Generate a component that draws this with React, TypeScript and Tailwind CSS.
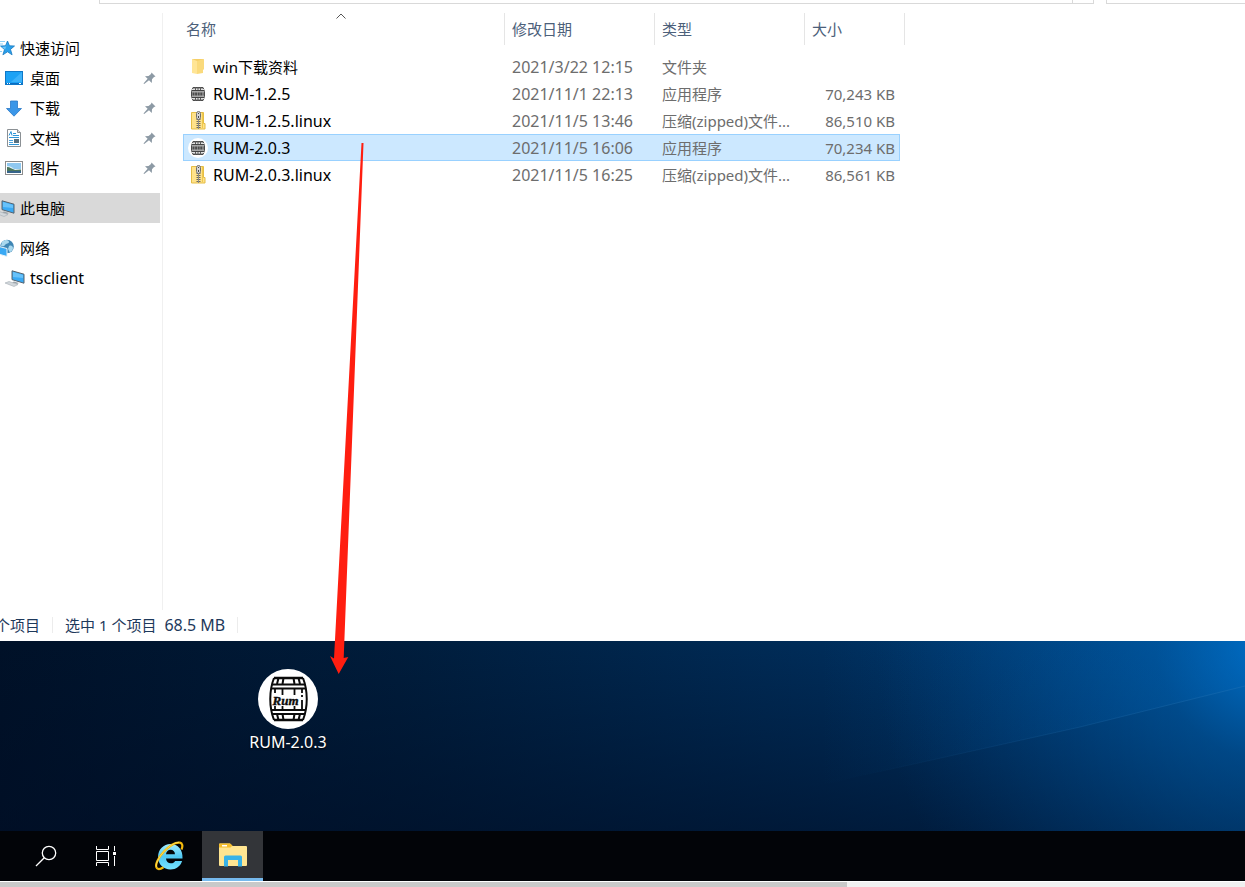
import React from "react";

function StarIcon() {
  return (
    <svg width="17" height="16" viewBox="0 0 17 16" className="shrink-0">
      <path d="M9.5 1l2 4.8 5 .2-4 3.4 1.6 5.4-4.6-3-4.6 3 1.6-5.2-4-3.6 5-.2z" fill="#2aa0ea" stroke="#1878c0" strokeWidth=".8" />
      <path d="M9.5 2.600l-1.600 4-4 .3 3.200 2.500z" fill="#6cc6f8" />
      <path d="M1 1.500h6M1 4h4M0 6.500h3M0 11.500h4" stroke="#8fd0f5" strokeWidth="1" />
    </svg>
  );
}

function DesktopIcon() {
  return (
    <svg width="18" height="14" viewBox="0 0 18 14" className="shrink-0">
      <rect x=".5" y=".5" width="17" height="13" fill="#1ca2f5" stroke="#0f78c8" />
      <path d="M17 1v10H6z" fill="#3cb2fa" />
      <path d="M1 12.5h16" stroke="#0a6cc0" />
      <path d="M2 12.5h1M4 12.5h1M14 12.5h2" stroke="#fff" />
    </svg>
  );
}

function DownloadIcon() {
  return (
    <svg width="18" height="17" viewBox="0 0 18 17" className="shrink-0">
      <path d="M5.5 1h7v7.5h4L9 16.2 1.5 8.5h4z" fill="#3a96e8" stroke="#2878c8" strokeWidth=".8" />
    </svg>
  );
}

function DocumentIcon() {
  return (
    <svg width="18" height="18" viewBox="0 0 18 18" className="shrink-0">
      <path d="M2.500.5h10l3 3v14h-13z" fill="#fff" stroke="#8b9094" />
      <path d="M12.500.5v3h3" fill="#ddd" stroke="#8b9094" />
      <path d="M4 6.500l2-4 1 4M8 4.500h3M8 6.500h6M4 8.500h10M4 15.500h10" stroke="#2f96d8" fill="none" />
      <path d="M4 11.500h4M4 13.500h4" stroke="#4aa3dc" />
      <rect x="9" y="10" width="5" height="4" fill="#59717f" />
    </svg>
  );
}

function PictureIcon() {
  return (
    <svg width="18" height="14" viewBox="0 0 18 14" className="shrink-0">
      <rect x=".5" y=".5" width="17" height="13" fill="#fff" stroke="#8c8c8c" />
      <rect x="2" y="2" width="14" height="10" fill="#8fc8f0" />
      <path d="M2 5c3 0 5 1 7 3h7v1H2z" fill="#e3f3fa" />
      <path d="M2 6c3 0 5 2 8 3l6-.5V10H2z" fill="#4b755c" />
      <path d="M2 10h14v2H2z" fill="#36648b" />
    </svg>
  );
}

function ComputerIcon() {
  return (
    <svg width="20" height="17" viewBox="0 0 20 17" className="shrink-0">
      <path d="M7 .8l12 3.4v9L7 9.600z" fill="#39a9f4" stroke="#56636d" strokeWidth="1" />
      <path d="M8 2l10 3v3L8 7z" fill="#67c2fa" />
      <path d="M9 11.500l5 1.500-2 1-5-1.500z" fill="#9aa2a8" />
      <path d="M0 13l4-1.500 9 3-4 2z" fill="#d3d8dc" stroke="#a5adb3" strokeWidth=".6" />
    </svg>
  );
}

function NetworkIcon() {
  return (
    <svg width="20" height="18" viewBox="0 0 20 18" className="shrink-0">
      <circle cx="12" cy="7.500" r="6.800" fill="#3f86b4" />
      <path d="M7 3c3-3 7-2 7 0s-3 1-4 3-3 1-4 1zM14 7c2-1 4 0 4 2s-2 4-3 4-1-2-2-3z" fill="#a9d8ee" />
      <path d="M0 6.500l12 3v8l-12-3.500z" fill="#39a9f4" stroke="#e9f2f8" strokeWidth="1" />
    </svg>
  );
}

function PinIcon() {
  return (
    <svg width="13" height="13" viewBox="0 0 13 13" className="shrink-0">
      <path d="M8.500.5l4 4-1.500.5L9 7.300 8.800 11 6 8.300 1.200 12l-.7-.5L4.600 6.800 2 4.300l3.600-.2L8 2z" fill="#8d9aa5" />
    </svg>
  );
}

function FolderIcon() {
  return (
    <svg width="14" height="17" viewBox="0 0 14 17" className="shrink-0">
      <path d="M1 1h11.500v10l-1 1H1z" fill="#f5cf68" />
      <path d="M1 1l5 2v13l-5-1z" fill="#ffe596" />
      <path d="M6 3v13l6-1V12l1-1V1z" fill="#fada7c" />
    </svg>
  );
}

function ZipIcon() {
  return (
    <svg width="15" height="19" viewBox="0 0 15 19" className="shrink-0">
      <path d="M.5 1.500h12v11h1.500v5.500H.5z" fill="#ffe28a" stroke="#e5bd45" />
      <path d="M11.500 2v15" stroke="#efc94d" />
      <path d="M7.500 8v10" stroke="#6c675a" strokeWidth="4" strokeDasharray="1 1" />
      <path d="M7.500 8v10" stroke="#8a8a8a" strokeWidth="1" />
      <rect x="5.500" y=".5" width="4" height="8" rx="2" fill="#d5d5d5" stroke="#707070" />
      <path d="M7.500 2v1M7.500 5v2" stroke="#444" />
    </svg>
  );
}

function BarrelDrawing() {
  return (
    <g fill="none" stroke="#0b0b0b">
      <path d="M16 9h29M16 51h29" strokeWidth="2.400" />
      <path d="M16 9c-5 13-5 29 0 42M45 9c5 13 5 29 0 42" strokeWidth="2" />
      <path d="M14 15.500h33M13 19.500h35M13 41h35M14 45h33" strokeWidth="2" />
      <path d="M20.500 9l-1.500 6M25.500 9l-1 6M35.500 9l1 6M40.500 9l1.500 6M19 45l1.500 6M24.500 45l1 6M36.500 45l-1 6M42 45l-1.500 6" strokeWidth="2" />
      <path d="M17 20v4M24.500 20v6M36.500 20v6M44 20v4M17 37v4M24.500 37v4M36.500 37v4M44 31v10M44 26v2" strokeWidth="1.800" />
    </g>
  );
}

function BarrelBadge() {
  return (
    <svg width="60" height="60" viewBox="0 0 60 60" className="shrink-0">
      <circle cx="30" cy="30" r="30" fill="#fff" />
      <BarrelDrawing />
      <text
        x="27.500"
        y="35.500"
        textAnchor="middle"
        fontFamily="Liberation Serif, serif"
        fontSize="13"
        fontWeight="700"
        fontStyle="italic"
        fill="#0b0b0b"
        stroke="#0b0b0b"
        strokeWidth=".4"
      >
        Rum
      </text>
    </svg>
  );
}

function SmallBarrelIcon() {
  return (
    <svg width="20" height="20" viewBox="0 0 20 20" className="shrink-0">
      <circle cx="10" cy="10" r="10" fill="#fff" />
      <path d="M5 3.500h10l1.500 4v5l-1.500 4H5l-1.500-4v-5z" fill="#a8a8a8" stroke="#4a4a4a" />
      <path d="M4 5.500h12M4 14.500h12" stroke="#e2e2e2" />
      <path d="M4 6.500h12M4 13.500h12" stroke="#444" />
      <path d="M4.500 10h11" stroke="#4c4c4c" strokeWidth="3" strokeDasharray="2 .6" />
      <path d="M7.500 3v3M10 3v3M12.500 3v3M7.500 14v3M10 14v3M12.500 14v3" stroke="#5a5a5a" />
    </svg>
  );
}

type NavItemProps = {
  icon: React.ReactNode;
  label: string;
  root?: boolean;
  pinned?: boolean;
  active?: boolean;
  latin?: boolean;
};

function NavItem({ icon, label, root, pinned, active, latin }: NavItemProps) {
  return (
    <li>
      <button
        type="button"
        className={`flex h-[30px] w-full items-center text-left ${active ? "bg-[#d9d9d9]" : "hover:bg-[#e5f3ff]"}`}
      >
        <span className={`flex shrink-0 items-center ${root ? "-ml-[5px] mr-[5px] w-5 justify-end" : "ml-[5px] mr-[5px] w-5"}`}>
          {icon}
        </span>
        <span className={`flex-1 text-black ${latin ? "text-base leading-5" : ""}`}>{label}</span>
        {pinned && (
          <span className="mr-1">
            <PinIcon />
          </span>
        )}
      </button>
    </li>
  );
}

const files = [
  { name: "win下载资料", date: "2021/3/22 12:15", type: "文件夹", size: "", kind: "folder" },
  { name: "RUM-1.2.5", date: "2021/11/1 22:13", type: "应用程序", size: "70,243 KB", kind: "app" },
  { name: "RUM-1.2.5.linux", date: "2021/11/5 13:46", type: "压缩(zipped)文件...", size: "86,510 KB", kind: "zip" },
  { name: "RUM-2.0.3", date: "2021/11/5 16:06", type: "应用程序", size: "70,234 KB", kind: "app", selected: true },
  { name: "RUM-2.0.3.linux", date: "2021/11/5 16:25", type: "压缩(zipped)文件...", size: "86,561 KB", kind: "zip" },
];

function FileTable() {
  return (
    <table className="ml-5 mt-[9px] w-[722px] table-fixed border-separate border-spacing-0 whitespace-nowrap text-[#6d6d6d]">
      <colgroup>
        <col />
        <col className="w-[150px]" />
        <col className="w-[150px]" />
        <col className="w-[95px]" />
        <col className="w-[5px]" />
      </colgroup>
      <thead>
        <tr className="h-8 text-left text-[#4c607a]">
          <th className="relative border-r border-[#e5e5e5] py-0 pl-[3px] font-normal">
            <button type="button">名称</button>
            <svg width="10" height="6" viewBox="0 0 10 6" className="absolute left-1/2 top-0 -ml-[7px]">
              <path d="M.5 5.500L5 1l4.500 4.500" fill="none" stroke="#555" />
            </svg>
          </th>
          <th className="border-r border-[#e5e5e5] py-0 pl-[7px] font-normal">
            <button type="button">修改日期</button>
          </th>
          <th className="border-r border-[#e5e5e5] py-0 pl-[7px] font-normal">
            <button type="button">类型</button>
          </th>
          <th colSpan={2} className="border-r border-[#e5e5e5] py-0 pl-[7px] font-normal">
            <button type="button">大小</button>
          </th>
        </tr>
      </thead>
      <tbody>
        <tr aria-hidden="true">
          <td colSpan={5} className="h-2 p-0" />
        </tr>
        {files.map((f) => {
          const cell = f.selected ? "border-y border-[#99d1ff] bg-[#cce8ff]" : "";
          return (
            <tr key={f.name} className="h-[27px]">
              <td className={`p-0 text-black ${cell} ${f.selected ? "border-l" : ""}`}>
                <span className={`flex items-center ${f.selected ? "pl-1" : "pl-[5px]"}`}>
                  <span className="mr-[5px] flex w-5 justify-center">
                    {f.kind === "folder" && <FolderIcon />}
                    {f.kind === "app" && <SmallBarrelIcon />}
                    {f.kind === "zip" && <ZipIcon />}
                  </span>
                  <span className={f.kind === "folder" ? "" : "text-base leading-5"}>{f.name}</span>
                </span>
              </td>
              <td className={`py-0 pl-[7px] pr-0 text-base leading-5 ${cell}`}>{f.date}</td>
              <td className={`py-0 pl-[7px] pr-0 ${cell}`}>{f.type}</td>
              <td className={`py-0 pl-0 text-right ${cell} ${f.selected ? "border-r pr-1" : "pr-[5px]"}`}>{f.size}</td>
              <td className="p-0" />
            </tr>
          );
        })}
      </tbody>
    </table>
  );
}

function Wallpaper() {
  return (
    <svg className="absolute inset-0 h-full w-full" viewBox="0 0 1245 190" preserveAspectRatio="none" aria-hidden="true">
      <defs>
        <linearGradient id="base" x1="0" x2="1" y1="0" y2="0">
          <stop offset="0" stopColor="#001128" />
          <stop offset=".32" stopColor="#001d3c" />
          <stop offset=".66" stopColor="#002d5a" />
          <stop offset=".85" stopColor="#003a70" />
          <stop offset="1" stopColor="#00427c" />
        </linearGradient>
        <linearGradient id="shade" x1="0" x2="0" y1="0" y2="1">
          <stop offset="0" stopColor="#000d24" stopOpacity="0" />
          <stop offset="1" stopColor="#000d24" stopOpacity=".6" />
        </linearGradient>
        <radialGradient id="glow" gradientUnits="userSpaceOnUse" cx="1275" cy="0" r="400">
          <stop offset="0" stopColor="#0074d0" />
          <stop offset=".3" stopColor="#0060b0" stopOpacity=".5" />
          <stop offset="1" stopColor="#004a90" stopOpacity="0" />
        </radialGradient>
        <linearGradient id="beam" gradientUnits="userSpaceOnUse" x1="820" x2="1245" y1="0" y2="0">
          <stop offset="0" stopColor="#0062b4" stopOpacity="0" />
          <stop offset="1" stopColor="#0062b4" stopOpacity=".25" />
        </linearGradient>
        <linearGradient id="edge" gradientUnits="userSpaceOnUse" x1="860" x2="1245" y1="0" y2="0">
          <stop offset="0" stopColor="#2a78b8" stopOpacity="0" />
          <stop offset="1" stopColor="#2a78b8" stopOpacity=".35" />
        </linearGradient>
      </defs>
      <rect width="1245" height="190" fill="url(#base)" />
      <rect width="1245" height="190" fill="url(#shade)" />
      <rect width="1245" height="190" fill="url(#glow)" />
      <path d="M820 0H1245V45L1080 86 860 135 820 145z" fill="url(#beam)" />
      <path d="M860 135L1080 86 1245 45" stroke="url(#edge)" fill="none" />
    </svg>
  );
}

function Taskbar() {
  return (
    <footer className="flex h-[50px] bg-[#020408] pl-4">
      <button type="button" aria-label="搜索" className="flex w-[60px] items-center justify-center">
        <svg width="22" height="22" viewBox="0 0 22 22" fill="none" stroke="#fff" strokeWidth="1.300">
          <circle cx="14" cy="8" r="6.700" />
          <path d="M9.300 12.700L1 21" />
        </svg>
      </button>
      <button type="button" aria-label="任务视图" className="flex w-[60px] items-center justify-center">
        <svg width="22" height="20" viewBox="0 0 22 20" fill="none" stroke="#fff">
          <path d="M1.500 0v3.500h12V0M1.500 20v-3.500h12V20M1.500 5.500h12v9h-12zM19.500 0v5M19.500 10v10" />
          <path d="M18 6h3v3h-3z" fill="#fff" stroke="none" />
        </svg>
      </button>
      <button type="button" aria-label="Internet Explorer" className="mr-1 flex w-[62px] items-center justify-center pl-1">
        <svg width="30" height="30" viewBox="0 0 30 30">
          <defs>
            <linearGradient id="ieBlue" x1="0" x2="0" y1="0" y2="1">
              <stop offset="0" stopColor="#a2ecff" />
              <stop offset=".5" stopColor="#4fc8f3" />
              <stop offset="1" stopColor="#79e4ff" />
            </linearGradient>
          </defs>
          <path
            fillRule="evenodd"
            d="M16.500 3C24 3 29 8.500 28.500 17.500H12c.2 3 2.200 4.800 4.800 4.800 2.200 0 3.500-.8 4.300-2.300h7C26.300 25.500 22 28.500 16.500 28.500 9.500 28.500 4 23.500 4 16S9.500 3 16.500 3zM12 13.200h9c-.2-2.700-2-4.400-4.400-4.400S12.400 10.500 12 13.200z"
            fill="url(#ieBlue)"
          />
          <path
            d="M27.500 8.500c1.500-3.500 1-6.300-1.600-6.800C22 1 15.500 4.800 10 10.500 3.500 17.300.5 24.800 3 27.300c1.300 1.300 3.800.7 6.500-1"
            fill="none"
            stroke="#f3b90c"
            strokeWidth="2.200"
          />
          <path d="M25 1.300C19.500 1.500 12 7.500 7.500 13.500 3.500 18.800 1.500 24 2.500 26" fill="none" stroke="#ffe163" strokeWidth=".9" />
        </svg>
      </button>
      <button
        type="button"
        aria-label="文件资源管理器"
        className="flex w-[61px] items-center justify-center border-b-[3px] border-[#76b9ed] bg-[#333539]"
      >
        <svg width="28" height="24" viewBox="0 0 28 24">
          <path d="M0 1.500Q0 .5 1 .5h10l2.500 2.500H27q1 0 1 1V22q0 1-1 1H1q-1 0-1-1z" fill="#ffe591" />
          <path d="M0 1.500Q0 .5 1 .5h10L13.500 2.500 11.500 4.500H0z" fill="#f4bd2d" />
          <path d="M3 2h5v1.500H3z" fill="#fff" />
          <path d="M5 23.500V14q0-1.500 1.500-1.500h15q1.500 0 1.500 1.500v9.500h-4V17H9v6.500z" fill="#38b3e8" />
        </svg>
      </button>
    </footer>
  );
}

export default function App() {
  return (
    <div className="relative flex min-h-screen flex-col overflow-hidden bg-white font-['Noto_Sans','Noto_Sans_CJK_SC',sans-serif] text-[15px] leading-5">
      <section className="flex flex-1 flex-col">
        <div className="flex h-1 gap-3 pl-[99px]">
          <div className="flex flex-1 justify-end border border-t-0 border-[#d9d9d9]">
            <span className="w-[21px] border-l border-[#d9d9d9]" />
          </div>
          <div className="w-[139px] border-b border-l border-[#d9d9d9]" />
        </div>
        <div className="flex flex-1">
          <nav className="mt-[9px] w-[163px] shrink-0 border-r border-[#f0f0f0] pr-[2px] pt-5">
            <ul>
              <NavItem root icon={<StarIcon />} label="快速访问" />
              <NavItem pinned icon={<DesktopIcon />} label="桌面" />
              <NavItem pinned icon={<DownloadIcon />} label="下载" />
              <NavItem pinned icon={<DocumentIcon />} label="文档" />
              <NavItem pinned icon={<PictureIcon />} label="图片" />
            </ul>
            <ul className="mt-[10px]">
              <NavItem root active icon={<ComputerIcon />} label="此电脑" />
            </ul>
            <ul className="mt-[10px]">
              <NavItem root icon={<NetworkIcon />} label="网络" />
              <NavItem latin icon={<ComputerIcon />} label="tsclient" />
            </ul>
          </nav>
          <main>
            <FileTable />
          </main>
        </div>
        <div className="flex h-[31px] items-center pb-[2px] text-[#1e395b]">
          <span className="-ml-[5px] mr-3">个项目</span>
          <span className="mr-3 h-4 border-l border-[#ececec]" />
          <span className="mr-2">选中 1 个项目</span>
          <span className="mr-3 text-base leading-5">68.5 MB</span>
          <span className="h-4 border-l border-[#ececec]" />
        </div>
      </section>

      <section className="relative h-[190px]">
        <Wallpaper />
        <button type="button" className="relative ml-[238px] mt-7 flex w-[100px] flex-col items-center text-white">
          <BarrelBadge />
          <span className="mt-[3px] text-base leading-5 [text-shadow:0_1px_2px_#000]">RUM-2.0.3</span>
        </button>
        <svg
          width="40"
          height="534"
          viewBox="328 141 40 534"
          className="pointer-events-none absolute bottom-[156px] left-[328px]"
          aria-hidden="true"
        >
          <path d="M361.500 143h2L343.700 658l4.600-1L338.700 674 330 656l4 2.500z" fill="#ff1e10" />
        </svg>
      </section>

      <Taskbar />
      <div className="flex h-[6px] border-t border-white bg-[#f0f0f0]">
        <div className="w-[68%] bg-[#c9c9c9]" />
      </div>
    </div>
  );
}
